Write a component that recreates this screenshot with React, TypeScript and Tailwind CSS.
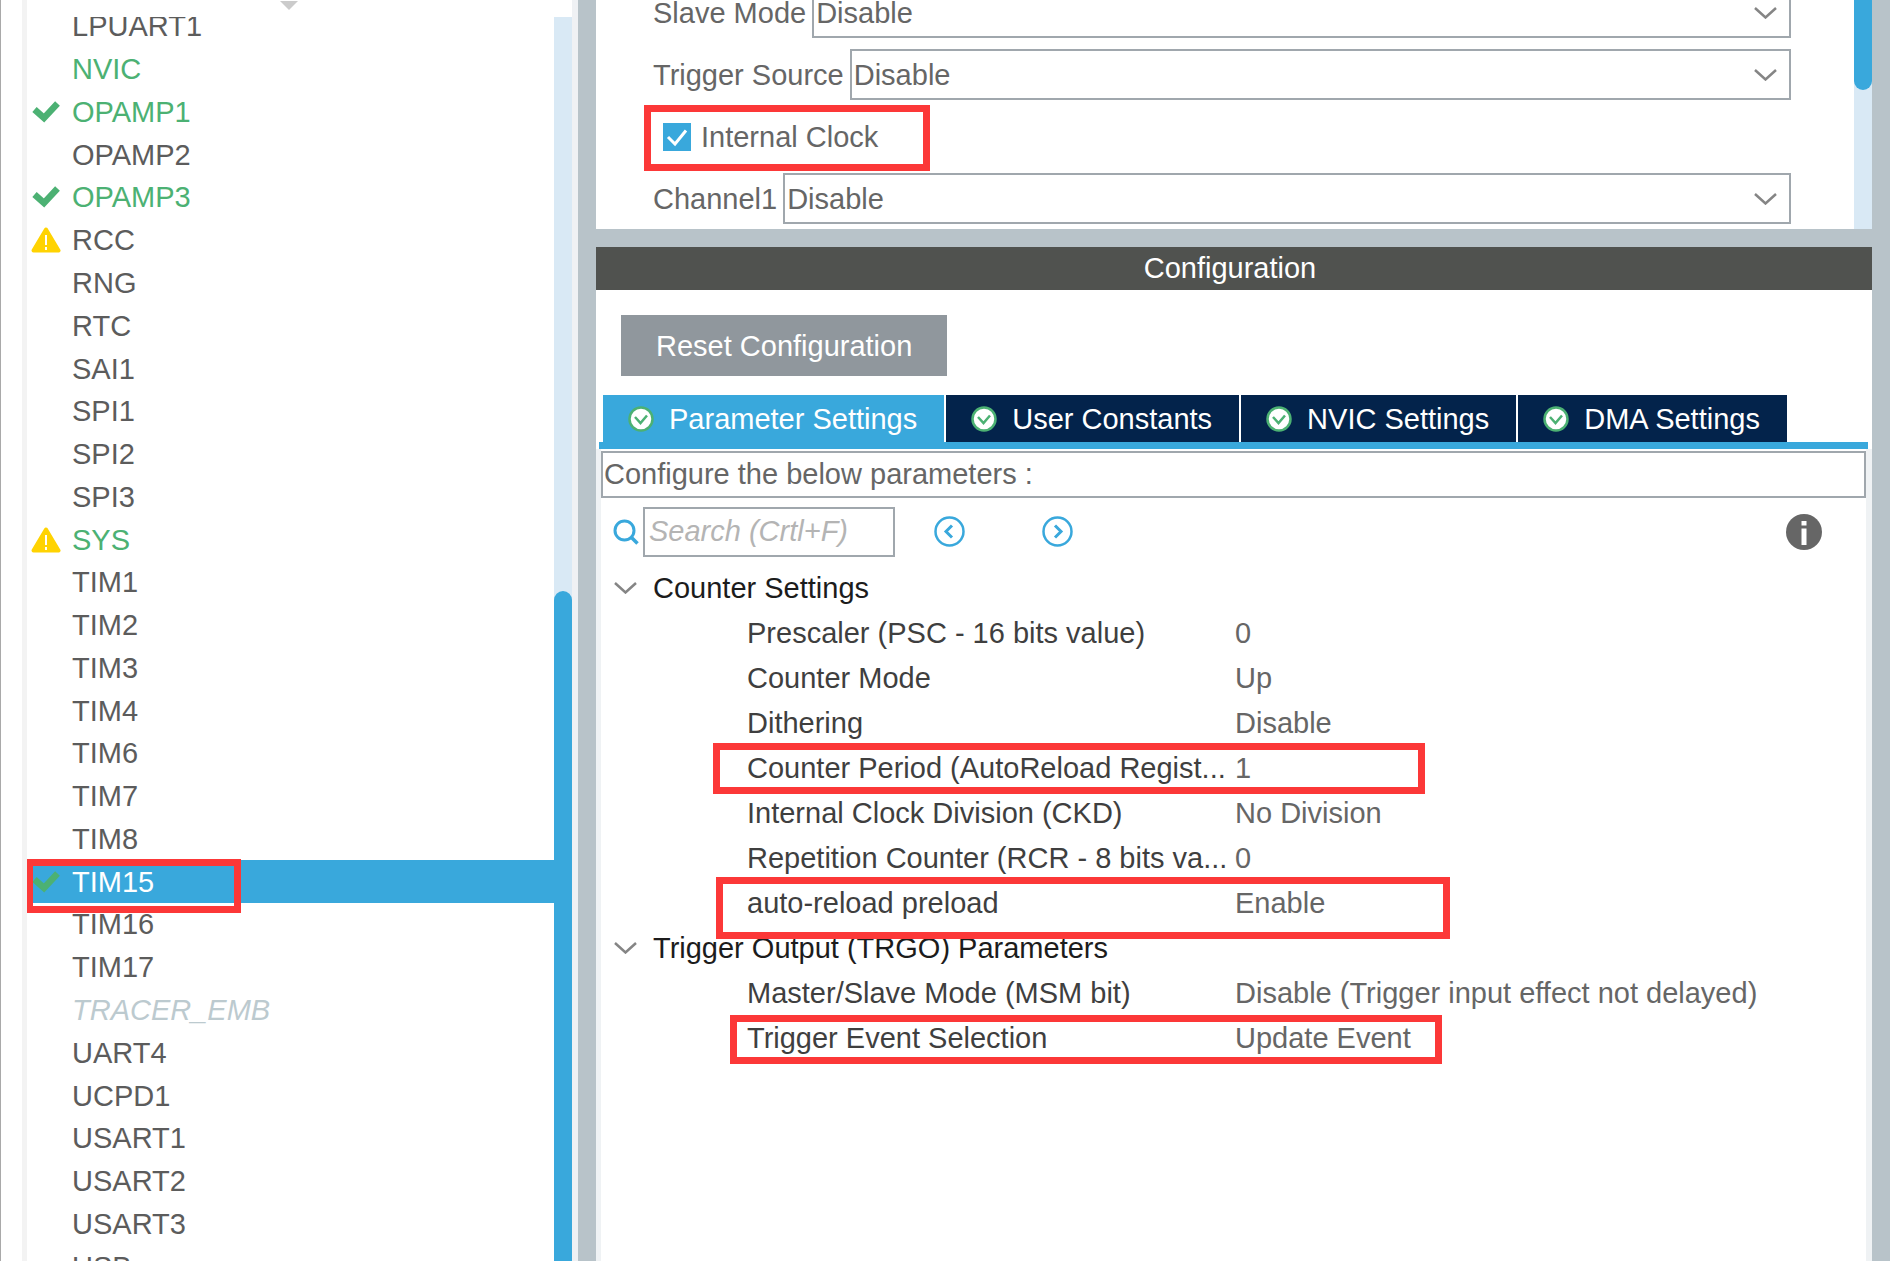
import React from "react";

type Status = "check" | "warning";

type Peripheral = {
  name: string;
  status?: Status;
  tone?: "green" | "disabled" | "selected";
};

const peripherals: Peripheral[] = [
  { name: "LPUART1" },
  { name: "NVIC", tone: "green" },
  { name: "OPAMP1", tone: "green", status: "check" },
  { name: "OPAMP2" },
  { name: "OPAMP3", tone: "green", status: "check" },
  { name: "RCC", status: "warning" },
  { name: "RNG" },
  { name: "RTC" },
  { name: "SAI1" },
  { name: "SPI1" },
  { name: "SPI2" },
  { name: "SPI3" },
  { name: "SYS", tone: "green", status: "warning" },
  { name: "TIM1" },
  { name: "TIM2" },
  { name: "TIM3" },
  { name: "TIM4" },
  { name: "TIM6" },
  { name: "TIM7" },
  { name: "TIM8" },
  { name: "TIM15", tone: "selected", status: "check" },
  { name: "TIM16" },
  { name: "TIM17" },
  { name: "TRACER_EMB", tone: "disabled" },
  { name: "UART4" },
  { name: "UCPD1" },
  { name: "USART1" },
  { name: "USART2" },
  { name: "USART3" },
  { name: "USB" },
];

const toneClass = {
  green: "text-[#4cb173]",
  disabled: "text-[#bccacf] italic",
  selected: "bg-[#39a8dc] text-white",
};

const tabs = ["Parameter Settings", "User Constants", "NVIC Settings", "DMA Settings"];

const groups = [
  {
    title: "Counter Settings",
    rows: [
      { label: "Prescaler (PSC - 16 bits value)", value: "0" },
      { label: "Counter Mode", value: "Up" },
      { label: "Dithering", value: "Disable" },
      {
        label: "Counter Period (AutoReload Regist...",
        value: "1",
        mark: "-left-[34px] -top-[2px] h-[51px] w-[712px]",
      },
      { label: "Internal Clock Division (CKD)", value: "No Division" },
      { label: "Repetition Counter (RCR - 8 bits va...", value: "0" },
      {
        label: "auto-reload preload",
        value: "Enable",
        mark: "-left-[31px] -top-[3px] h-[62px] w-[734px]",
      },
    ],
  },
  {
    title: "Trigger Output (TRGO) Parameters",
    rows: [
      { label: "Master/Slave Mode (MSM bit)", value: "Disable (Trigger input effect not delayed)" },
      {
        label: "Trigger Event Selection",
        value: "Update Event",
        mark: "-left-[17px] top-0 h-[49px] w-[712px]",
      },
    ],
  },
];

function Mark({ className }: { className: string }) {
  return <span className={`pointer-events-none absolute z-10 border-[7px] border-[#fc3838] ${className}`} />;
}

function Chevron() {
  return (
    <svg className="h-3 w-[23px]" viewBox="0 0 23 12" fill="none" stroke="#858585" strokeWidth="2.5">
      <path d="M1 1l10.500 9.500L22 1" />
    </svg>
  );
}

function StatusIcon({ status }: { status?: Status }) {
  if (status === "check") {
    return (
      <svg className="h-[22px] w-[28px]" viewBox="0 0 28 22" fill="none" stroke="#4cb173" strokeWidth="6.5">
        <path d="M2.500 8.500l9.500 8.500L25.500 2.500" />
      </svg>
    );
  }
  if (status === "warning") {
    return (
      <svg className="h-[26px] w-[30px]" viewBox="0 0 30 26">
        <path d="M15 2.500L27.500 23.500H2.500z" fill="#ffd302" stroke="#ffd302" strokeWidth="4" strokeLinejoin="round" />
        <path d="M15 8v10M15 20v3" stroke="#fff" strokeWidth="2" />
      </svg>
    );
  }
  return null;
}

function TabCheck() {
  return (
    <svg className="size-[26px]" viewBox="0 0 26 26" fill="none">
      <circle cx="13" cy="13" r="11.5" fill="#fff" stroke="#4cb173" strokeWidth="2.5" />
      <path d="M7 11l5.5 6L19 9.5" stroke="#4cb173" strokeWidth="2.5" />
    </svg>
  );
}

function SelectRow({ id, label }: { id: string; label: string }) {
  return (
    <div className="flex h-[51px] items-center gap-[6px]">
      <label htmlFor={id} className="shrink-0">
        {label}
      </label>
      <div className="relative h-full flex-1">
        <select
          id={id}
          defaultValue="Disable"
          className="h-full w-full appearance-none border-2 border-[#a0a7ad] bg-white pl-[2px] leading-9"
        >
          <option>Disable</option>
        </select>
        <span className="pointer-events-none absolute inset-y-0 right-[14px] flex items-center">
          <Chevron />
        </span>
      </div>
    </div>
  );
}

function Sidebar() {
  return (
    <aside className="flex w-[578px] shrink-0 flex-col border-l border-[#a9a9a9] bg-white pl-[21px]">
      <div className="flex min-h-0 flex-1 flex-col border-l-[5px] border-r-[6px] border-l-[#f3f3f3] border-r-[#eff1f4]">
        <div className="flex h-[17px] shrink-0 justify-center pr-[22px]">
          <svg className="h-[10px] w-[18px]" viewBox="0 0 18 10">
            <path d="M0 1h18L9 10z" fill="#cbcbcb" />
          </svg>
        </div>
        <div className="flex min-h-0 flex-1">
          <div className="flex-1 overflow-hidden">
            <ul className="-mt-[12px] flex h-[1283px] flex-col leading-8 text-[#5c5c5c]">
              {peripherals.map((p) => (
                <li key={p.name} className="relative flex-1">
                  <button
                    className={`flex h-full w-full items-center gap-[11px] pl-1 text-left ${p.tone ? toneClass[p.tone] : ""}`}
                  >
                    <span className="flex w-[30px] shrink-0 justify-center">
                      <StatusIcon status={p.status} />
                    </span>
                    {p.name}
                  </button>
                  {p.tone === "selected" && <Mark className="-left-[1px] -top-[1px] h-[54px] w-[215px]" />}
                </li>
              ))}
            </ul>
          </div>
          <div className="flex w-[18px] flex-col bg-[#d9e9f5] pt-[574px]">
            <div className="flex-1 rounded-t-full bg-[#39a8dc]" />
          </div>
        </div>
      </div>
    </aside>
  );
}

function ModePanel() {
  return (
    <section className="flex h-[229px] shrink-0 overflow-hidden bg-white text-[#666]">
      <div className="-mt-[13px] flex flex-1 flex-col gap-[11px] pl-[57px] pr-[63px]">
        <SelectRow id="slave-mode" label="Slave Mode" />
        <SelectRow id="trigger-source" label="Trigger Source" />
        <div className="relative flex h-[51px] items-center gap-[10px] pl-[10px]">
          <span className="relative flex">
            <input
              id="internal-clock"
              type="checkbox"
              defaultChecked
              className="size-7 appearance-none bg-[#39a8dc]"
            />
            <svg
              className="pointer-events-none absolute inset-0 size-7"
              viewBox="0 0 28 28"
              fill="none"
              stroke="#fff"
              strokeWidth="3"
            >
              <path d="M5 14l7 7L23 7.5" />
            </svg>
          </span>
          <label htmlFor="internal-clock">Internal Clock</label>
          <Mark className="-left-[9px] -top-[6px] h-[66px] w-[286px]" />
        </div>
        <SelectRow id="channel1" label="Channel1" />
      </div>
      <div className="w-[18px] shrink-0 bg-[#d9e9f5]">
        <div className="h-[90px] rounded-b-full bg-[#39a8dc]" />
      </div>
    </section>
  );
}

function ParameterTable() {
  return (
    <table className="w-full table-fixed text-left">
      <colgroup>
        <col className="w-[52px]" />
        <col className="w-[94px]" />
        <col className="w-[488px]" />
        <col />
      </colgroup>
      {groups.map((group) => (
        <tbody key={group.title}>
          <tr className="h-[45px]">
            <td className="pl-[13px]">
              <button className="block" aria-label={group.title}>
                <Chevron />
              </button>
            </td>
            <th colSpan={3} className="font-normal text-[#1c1c1c]">
              {group.title}
            </th>
          </tr>
          {group.rows.map((row) => (
            <tr key={row.label} className="h-[45px]">
              <td colSpan={2} />
              <td className="relative whitespace-nowrap text-[#3f3f3f]">
                {row.label}
                {row.mark && <Mark className={row.mark} />}
              </td>
              <td className="whitespace-nowrap text-[#666]">{row.value}</td>
            </tr>
          ))}
        </tbody>
      ))}
    </table>
  );
}

function ConfigurationPanel() {
  return (
    <section className="flex min-h-0 flex-1 flex-col bg-white">
      <h2 className="h-[43px] shrink-0 bg-[#50524f] pr-2 text-center leading-[43px] text-white">Configuration</h2>
      <div className="px-[25px] pb-[19px] pt-[25px]">
        <button className="h-[61px] bg-[#90979d] px-[35px] text-white">Reset Configuration</button>
      </div>
      <div role="tablist" className="ml-[3px] mr-1 flex gap-[2px] border-b-[7px] border-[#39a8dc] pl-1">
        {tabs.map((tab, i) => (
          <button
            key={tab}
            role="tab"
            aria-selected={i === 0}
            className={`flex h-[47px] items-center gap-[15px] pl-[25px] pr-[27px] text-white ${i === 0 ? "bg-[#39a8dc]" : "bg-[#03234b]"}`}
          >
            <TabCheck />
            {tab}
          </button>
        ))}
      </div>
      <div className="min-h-0 flex-1 border-l-[5px] border-r-[6px] border-[#eff2f4] pt-[2px]">
        <p className="h-[47px] border-2 border-[#a0a7ad] pl-px leading-[43px] text-[#666]">
          Configure the below parameters :
        </p>
        <div className="flex h-[67px] items-center pl-3 pr-[44px]">
          <label htmlFor="search" aria-label="Search">
            <svg className="size-[26px]" viewBox="0 0 26 26" fill="none" stroke="#39a8dc" strokeWidth="3">
              <circle cx="11.5" cy="11.5" r="9.5" />
              <path d="M18 18l6.500 6.500" strokeWidth="3.5" />
            </svg>
          </label>
          <input
            id="search"
            type="text"
            placeholder="Search (Crtl+F)"
            className="ml-1 h-[50px] w-[252px] border-2 border-[#a0a7ad] pl-1 placeholder:italic placeholder:text-[#b4b4b4]"
          />
          <button className="ml-[39px]" aria-label="Previous">
            <svg className="size-[31px]" viewBox="0 0 31 31" fill="none" stroke="#39a8dc">
              <circle cx="15.5" cy="15.5" r="14" strokeWidth="2.5" />
              <path d="M18 9.5l-6 6 6 6" strokeWidth="3" />
            </svg>
          </button>
          <button className="ml-[77px]" aria-label="Next">
            <svg className="size-[31px]" viewBox="0 0 31 31" fill="none" stroke="#39a8dc">
              <circle cx="15.5" cy="15.5" r="14" strokeWidth="2.5" />
              <path d="M13 9.5l6 6-6 6" strokeWidth="3" />
            </svg>
          </button>
          <button className="ml-auto" aria-label="Information">
            <svg className="size-9" viewBox="0 0 36 36">
              <circle cx="18" cy="18" r="18" fill="#666" />
              <path d="M18 7v4.5M18 14.5V31" stroke="#fff" strokeWidth="5" />
            </svg>
          </button>
        </div>
        <ParameterTable />
      </div>
    </section>
  );
}

export default function App() {
  return (
    <div className="flex h-screen overflow-hidden bg-white pr-[5px] font-['Liberation_Sans',Arial,sans-serif] text-[29px]">
      <Sidebar />
      <main className="flex min-w-0 flex-1 flex-col gap-[18px] bg-[#b8c3c9] px-[18px] leading-9">
        <ModePanel />
        <ConfigurationPanel />
      </main>
    </div>
  );
}
